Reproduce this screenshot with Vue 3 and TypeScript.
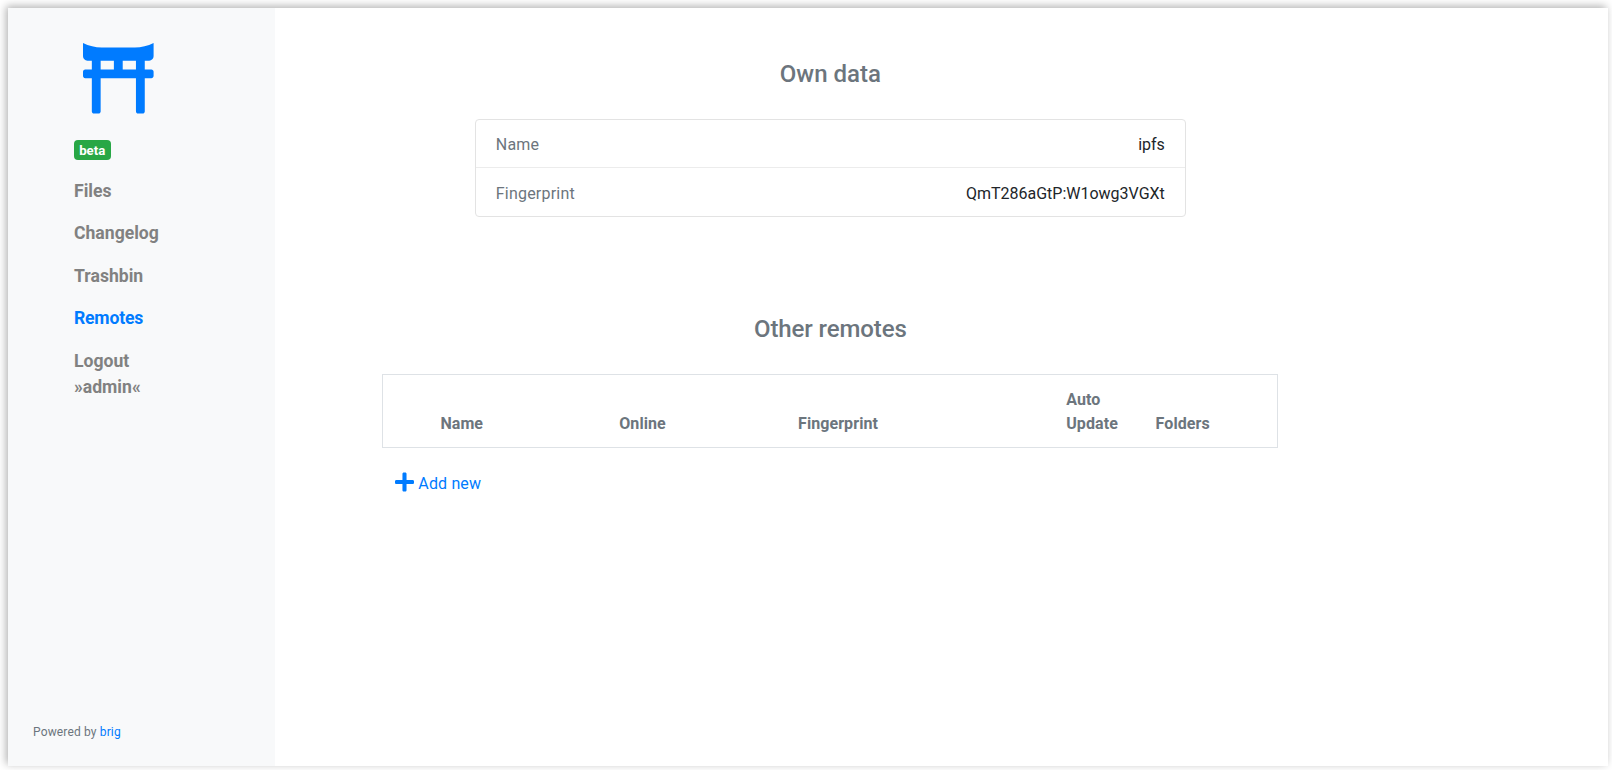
<script setup lang="ts">
interface NavItem {
  label: string
  active?: boolean
}

const navItems: NavItem[] = [
  { label: 'Files' },
  { label: 'Changelog' },
  { label: 'Trashbin' },
  { label: 'Remotes', active: true },
  { label: 'Logout »admin«' },
]

const ownData = [
  { key: 'Name', value: 'ipfs' },
  { key: 'Fingerprint', value: 'QmT286aGtP:W1owg3VGXt' },
]

const columns = ['', 'Name', 'Online', 'Fingerprint', 'Auto Update', 'Folders', '']
</script>

<template>
  <div class="window">
    <aside class="sidebar">
      <svg class="logo" viewBox="0 0 512 512" aria-hidden="true">
        <path
          fill="currentColor"
          d="M376.45 32h-240.9A303.17 303.17 0 0 1 0 0v96c0 17.67 14.33 32 32 32h32v64H16c-8.84 0-16 7.16-16 16v32c0 8.84 7.16 16 16 16h48v240c0 8.84 7.16 16 16 16h32c8.84 0 16-7.16 16-16V256h256v240c0 8.84 7.16 16 16 16h32c8.84 0 16-7.16 16-16V256h48c8.84 0 16-7.16 16-16v-32c0-8.84-7.16-16-16-16h-48v-64h32c17.67 0 32-14.33 32-32V0a303.17 303.17 0 0 1-135.55 32zM128 128h96v64h-96v-64zm256 64h-96v-64h96v64z"
        />
      </svg>
      <span class="badge">beta</span>
      <nav class="nav">
        <a v-for="item in navItems" :key="item.label" class="nav-item" :class="{ active: item.active }">{{ item.label }}</a>
      </nav>
      <footer class="footer">Powered by <a class="link">brig</a></footer>
    </aside>

    <main class="main">
      <h4 class="title">Own data</h4>
      <ul class="own">
        <li v-for="row in ownData" :key="row.key" class="own-row">
          <span class="own-key">{{ row.key }}</span>
          <span>{{ row.value }}</span>
        </li>
      </ul>

      <h4 class="title remotes-title">Other remotes</h4>
      <div class="remotes">
        <div class="remotes-head">
          <span v-for="(col, i) in columns" :key="i" class="th">{{ col }}</span>
        </div>
        <button class="add" type="button">
          <svg class="plus" viewBox="0 0 448 512" aria-hidden="true">
            <path
              fill="currentColor"
              d="M416 208H272V64c0-17.67-14.33-32-32-32h-32c-17.67 0-32 14.33-32 32v144H32c-17.67 0-32 14.33-32 32v32c0 17.67 14.33 32 32 32h144v144c0 17.67 14.33 32 32 32h32c17.67 0 32-14.33 32-32V304h144c17.67 0 32-14.33 32-32v-32c0-17.67-14.33-32-32-32z"
            />
          </svg>
          <span>Add new</span>
        </button>
      </div>
    </main>
  </div>
</template>

<style>
body {
  display: flow-root;
  height: 100vh;
  background: #fff;
  overflow: hidden;
}
</style>

<style scoped>
.window {
  box-sizing: border-box;
  display: flex;
  width: 1600px;
  height: 758px;
  margin: 8px 0 0 8px;
  background: #fff;
  box-shadow: -2px -2px 8px rgba(0, 0, 0, 0.3);
  font-family: Roboto, 'Liberation Sans', sans-serif;
  font-size: 16px;
  line-height: 24px;
  color: #212529;
}

.sidebar {
  box-sizing: border-box;
  display: flex;
  flex-direction: column;
  align-items: flex-start;
  width: 266.67px;
  padding: 35px 25px 22px 66px;
  background: #f8f9fa;
}

.logo {
  width: 70.6px;
  height: 70.6px;
  margin: 0.4px 0 0 9px;
  color: #007bff;
}

.badge {
  margin-top: 26px;
  padding: 4.1px 5.6px 2.7px 5.2px;
  border-radius: 4px;
  background: #28a745;
  color: #fff;
  font-size: 13.2px;
  font-weight: 700;
  line-height: 13.2px;
}

.nav {
  display: flex;
  flex-direction: column;
  width: 110px;
  margin-top: 10px;
}

.nav-item {
  padding: 8px 0;
  color: #818181;
  font-size: 17.6px;
  font-weight: 700;
  line-height: 26.4px;
}

.active,
.link {
  color: #007bff;
}

.active {
  letter-spacing: -0.2px;
}

.footer {
  margin-top: auto;
  margin-left: -41px;
  color: #6c757d;
  font-size: 12px;
  letter-spacing: 0.15px;
}

.main {
  display: flex;
  flex: 1;
  flex-direction: column;
  align-items: center;
  padding: 52px 222px 0 0;
}

.title {
  margin: 0;
  color: #6c757d;
  font-size: 24px;
  font-weight: 500;
  line-height: 29px;
}

.remotes-title {
  letter-spacing: -0.1px;
}

.own {
  width: 711px;
  box-sizing: border-box;
  margin: 30px 0 98px;
  padding: 0;
  border: 1px solid #e3e3e3;
  border-radius: 4px;
  list-style: none;
}

.own-row {
  display: flex;
  justify-content: space-between;
  padding: 13px 20px 10px;
}

.own-row + .own-row {
  padding-top: 14px;
  border-top: 1px solid #ececec;
}

.own-key {
  color: #6c757d;
  letter-spacing: 0.2px;
}

.remotes {
  width: 896px;
  margin-top: 30px;
}

.remotes-head {
  display: grid;
  grid-template-columns: 0.5fr 2fr 2fr 3fr 1fr 1fr 0.5fr;
  align-items: end;
  border: 1px solid #dee2e6;
  color: #6c757d;
  font-weight: 700;
}

.th {
  min-width: 0;
  box-sizing: border-box;
  padding: 13px 11px 11px 12.4px;
  letter-spacing: 0.08px;
}

.th:first-child,
.th:last-child {
  padding: 0;
}

.add {
  display: flex;
  align-items: center;
  gap: 4px;
  margin: 24px 0 0 13px;
  padding: 0;
  border: 0;
  background: none;
  color: #007bff;
  font: inherit;
  letter-spacing: 0.15px;
}

.plus {
  width: 19px;
  height: 22px;
  margin-top: -4px;
}
</style>
